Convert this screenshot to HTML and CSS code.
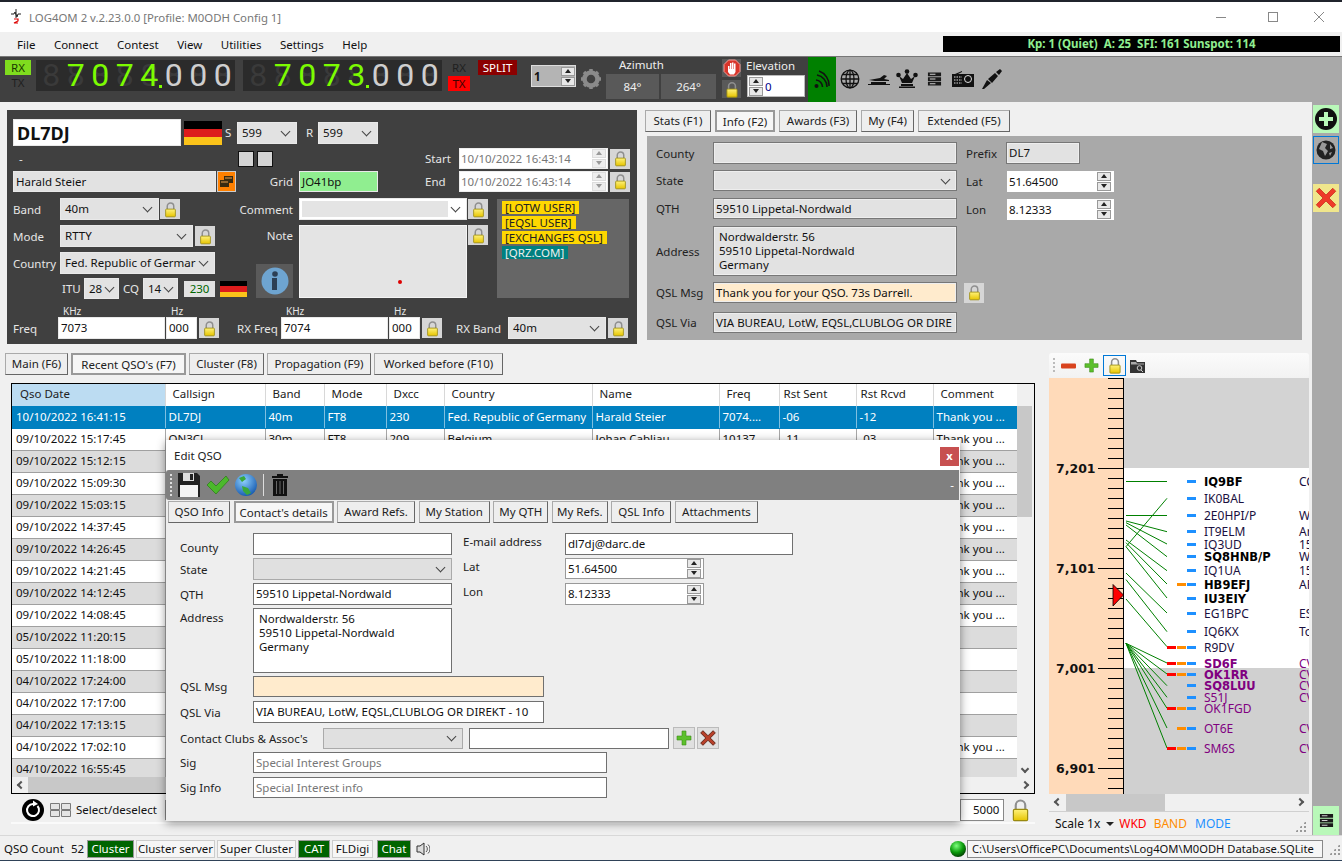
FILE: index.html
```html
<!DOCTYPE html>
<html lang="en">
<head>
    <meta charset="UTF-8">
    <title>LOG4OM 2</title>
    <link rel="stylesheet" href="styles.css">
</head>
<body>

    <!-- shared icons -->
    <svg class="sprite" width="0" height="0">
        <defs>
            <linearGradient id="lockFill" x1="0" y1="0" x2="0" y2="1">
                <stop offset="0" stop-color="#fff27a"/>
                <stop offset="1" stop-color="#e6c400"/>
            </linearGradient>
            <radialGradient id="globeFill" cx="0.4" cy="0.3" r="0.8">
                <stop offset="0" stop-color="#8fd0ff"/>
                <stop offset="1" stop-color="#0a4fa8"/>
            </radialGradient>
            <radialGradient id="ledFill" cx="0.4" cy="0.3" r="0.7">
                <stop offset="0" stop-color="#7dff7d"/>
                <stop offset="0.6" stop-color="#0a9a0a"/>
                <stop offset="1" stop-color="#034403"/>
            </radialGradient>
            <symbol id="lock" viewBox="0 0 16 20">
                <path d="M4 10V6a4 4 0 0 1 8 0v4" fill="none" stroke="#8f8f8f" stroke-width="1.8"/>
                <rect x="2" y="9.5" width="12" height="9.5" rx="1" fill="url(#lockFill)" stroke="#9a8a10"/>
            </symbol>
            <symbol id="plus" viewBox="0 0 16 16">
                <path d="M6 1h4v5h5v4h-5v5H6v-5H1V6h5z" fill="#5cc02c" stroke="#3c8a1a" stroke-width="0.6"/>
            </symbol>
            <symbol id="cross" viewBox="0 0 16 16">
                <path d="M1.5 3.5l2-2L8 6l4.500-4.500 2 2L10 8l4.500 4.500-2 2L8 10l-4.500 4.500-2-2L6 8z" fill="#b8402a" stroke="#5a1d10" stroke-width="0.8"/>
            </symbol>
            <symbol id="redcross" viewBox="0 0 16 16">
                <path d="M1.5 3.5l2-2L8 6l4.500-4.500 2 2L10 8l4.500 4.500-2 2L8 10l-4.500 4.500-2-2L6 8z" fill="#ee3a2a" stroke="#c92818" stroke-width="0.5"/>
            </symbol>
            <symbol id="stack" viewBox="0 0 16 16">
                <path d="M1 1h14v4H1zM1 6h14v4H1zM1 11h14v4H1z" fill="#1a1a1a"/>
                <path d="M3 2.500h6v1H3zM3 7.500h6v1H3zM3 12.500h6v1H3z" fill="#cfcfcf"/>
            </symbol>
        </defs>
    </svg>

    <div class="titlebar">
        <svg class="app-icon" width="12" height="16" viewBox="0 0 12 16">
            <path d="M6 0v9M1 5h3l1-2 2 5 1-3h3" fill="none" stroke="#222" stroke-width="1"/>
            <path d="M4 10h4v2l-4 2h4" fill="none" stroke="#d00" stroke-width="1.2"/>
        </svg>
        <span class="title-text">LOG4OM 2 v.2.23.0.0 [Profile: M0ODH Config 1]</span>
        <div class="win-btns">
            <svg class="win-min" width="12" height="12" viewBox="0 0 12 12"><path d="M1 6.500h10" stroke="#888"/></svg>
            <svg width="12" height="12" viewBox="0 0 12 12"><rect x="1.500" y="1.500" width="9" height="9" fill="none" stroke="#888"/></svg>
            <svg width="12" height="12" viewBox="0 0 12 12"><path d="M1 1l10 10M11 1L1 11" stroke="#888"/></svg>
        </div>
    </div>

    <div class="menubar">
        <span>File</span><span>Connect</span><span>Contest</span><span>View</span><span>Utilities</span><span>Settings</span><span>Help</span>
        <div class="kp-bar">Kp: 1 (Quiet)&nbsp; A: 25&nbsp; SFI: 161 Sunspot: 114</div>
    </div>

    <div class="toolbar">
        <div class="tb-dark">
            <div class="rxtx-left">
                <div class="rx-on">RX</div>
                <div class="tx-off">TX</div>
            </div>
            <div class="display ml5">
                <span class="dig"></span><span class="dig on">7</span><span class="dig on">0</span><span class="dig on">7</span><span class="dig on pt">4</span><span class="dig">0</span><span class="dig">0</span><span class="dig">0</span>
            </div>
            <div class="display ml8">
                <span class="dig"></span><span class="dig on">7</span><span class="dig on">0</span><span class="dig on">7</span><span class="dig on pt">3</span><span class="dig">0</span><span class="dig">0</span><span class="dig">0</span>
            </div>
            <div class="rxtx-right">
                <div class="tx-off">RX</div>
                <div class="tx-on">TX</div>
            </div>
            <div class="split">SPLIT</div>
            <div class="vfo-spin"><span class="vfo-num">1</span><span class="spin-btns"><i class="up"></i><i class="down"></i></span></div>
            <svg class="gear" width="22" height="22" viewBox="0 0 22 22">
                <circle cx="11" cy="11" r="6.500" fill="none" stroke="#8a8a8a" stroke-width="4.500"/>
                <path d="M11 1v4M11 17v4M1 11h4M17 11h4M4 4l3 3M15 15l3 3M18 4l-3 3M7 15l-3 3" stroke="#8a8a8a" stroke-width="3.500"/>
            </svg>
            <div class="azimuth">
                <div class="az-label">Azimuth</div>
                <div class="az-boxes"><span class="az-box w53">84°</span><span class="az-box w55">264°</span></div>
            </div>
            <div class="stop-col">
                <div class="stop-btn">
                    <svg width="18" height="18" viewBox="0 0 18 18">
                        <path d="M5.500 1h7L17 5.500v7L12.500 17h-7L1 12.500v-7z" fill="#d8352a" stroke="#f2a09a"/>
                        <path d="M5 7h1.500v4H5zM7 4h1.500v7H7zM9 3.500h1.500V11H9zM11 4.500h1.500V11H11zM5 10h7.500v3L11 15.500H7L5 13z" fill="#fff"/>
                    </svg>
                </div>
                <div class="stop-btn stop-lock"><svg width="14" height="17"><use href="#lock"/></svg></div>
            </div>
            <div class="elev-col">
                <div class="elev-label">Elevation</div>
                <div class="elev-spin"><span class="spin-btns"><i class="up"></i><i class="down"></i></span><span class="elev-num">0</span></div>
            </div>
        </div>
        <div class="tb-green">
            <svg width="16" height="19" viewBox="0 0 16 19">
                <circle cx="2.500" cy="16" r="2" fill="#111"/>
                <path d="M2 10a7 7 0 0 1 6.500 7M3 5a12 12 0 0 1 10 12M5 1a15 15 0 0 1 10 15" fill="none" stroke="#111" stroke-width="1.600"/>
            </svg>
        </div>
        <div class="tb-icons">
            <svg class="ml4" width="20" height="20" viewBox="0 0 20 20">
                <g fill="none" stroke="#111" stroke-width="1.300">
                    <circle cx="10" cy="10" r="8.800"/>
                    <ellipse cx="10" cy="10" rx="4" ry="8.800"/>
                    <path d="M10 1v18M1.500 10h17M3 5.500h14M3 14.500h14"/>
                </g>
            </svg>
            <svg class="ml8" width="22" height="12" viewBox="0 0 22 12">
                <path d="M0 11h22v1H0zM3 9h15v2H3zM1 7l11-2 4-3 3 1-3 3 5 1v1H7z" fill="#111"/>
            </svg>
            <svg class="ml6" width="22" height="19" viewBox="0 0 22 19">
                <circle cx="11" cy="2.500" r="2.300" fill="#111"/><circle cx="2.500" cy="6" r="2.300" fill="#111"/><circle cx="19.500" cy="6" r="2.300" fill="#111"/>
                <path d="M3 7l3 7h10l3-7-4 3-4-6-4 6zM5 15h12v2H5zM3 17.500h16V19H3z" fill="#111"/>
            </svg>
            <svg class="ml9" width="15" height="16" viewBox="0 0 16 16"><use href="#stack"/></svg>
            <svg class="ml10" width="22" height="16" viewBox="0 0 22 16">
                <path d="M0 3h22v13H0z" fill="#111"/><path d="M3 3l7-3v1L6 3z" fill="#111"/>
                <circle cx="16" cy="8" r="3.500" fill="none" stroke="#ddd"/>
                <path d="M2 6h8M2 9h8M2 12h8" stroke="#ddd" stroke-dasharray="1.500 1"/>
            </svg>
            <svg class="ml7" width="22" height="20" viewBox="0 0 22 20">
                <path d="M1 20l5-9 4 3-7 6zM7 10l7-6 3 3-6 7zM15 3l4-3 2 2-3 4z" fill="#111"/>
            </svg>
        </div>
    </div>

    <div class="main">
        <div class="content">

            <div class="top-row">
                <!-- main QSO entry -->
                <div class="qso-panel">
                    <div class="row mt9">
                        <div class="fld call w168">DL7DJ</div>
                        <div class="flag w38 h24 ml3"></div>
                        <span class="lbl w12 ml3">S</span>
                        <div class="fld sel w60 h22">599</div>
                        <span class="lbl w12 ml9">R</span>
                        <div class="fld sel w60 h22">599</div>
                    </div>
                    <div class="row mt2">
                        <span class="lbl w225 pl6">-</span>
                        <div class="mini"></div>
                        <div class="mini ml3"></div>
                        <span class="lbl w34 ml152">Start</span>
                        <div class="fld date w149">10/10/2022 16:43:14<span class="spin-btns light"><i class="up"></i><i class="down"></i></span></div>
                        <div class="lock ml2"><svg width="13" height="17"><use href="#lock"/></svg></div>
                    </div>
                    <div class="row mt2">
                        <div class="fld w203">Harald Steier</div>
                        <div class="orange-btn ml1">
                            <svg width="13" height="11" viewBox="0 0 13 11"><path d="M4 0h9v7H4zM0 4h9v7H0z" fill="#3a2a10"/><path d="M1 6h7M5 2h7" stroke="#e8a050"/></svg>
                        </div>
                        <span class="lbl w57 right">Grid</span>
                        <div class="fld green ml6 w79">JO41bp</div>
                        <span class="lbl w34 ml47">End</span>
                        <div class="fld date w149">10/10/2022 16:43:14<span class="spin-btns light"><i class="up"></i><i class="down"></i></span></div>
                        <div class="lock ml2"><svg width="13" height="17"><use href="#lock"/></svg></div>
                    </div>

                    <div class="mid-block">
                        <div class="w222">
                            <div class="row h22">
                                <span class="lbl w47">Band</span>
                                <div class="fld sel w99 h22">40m</div>
                                <div class="lock ml1"><svg width="13" height="17"><use href="#lock"/></svg></div>
                            </div>
                            <div class="row h22 mt5">
                                <span class="lbl w47">Mode</span>
                                <div class="fld sel w133 h22">RTTY</div>
                                <div class="lock ml2"><svg width="13" height="17"><use href="#lock"/></svg></div>
                            </div>
                            <div class="row h22 mt5">
                                <span class="lbl w47">Country</span>
                                <div class="fld sel w155 h22">Fed. Republic of Germar</div>
                            </div>
                            <div class="row row-itu mt4">
                                <span class="lbl w22 ml49">ITU</span>
                                <div class="fld sel tiny w35">28</div>
                                <span class="lbl w20 ml4">CQ</span>
                                <div class="fld sel tiny w35">14</div>
                                <div class="dxcc ml6">230</div>
                                <div class="flag w27 h16 ml5"></div>
                            </div>
                        </div>
                        <div class="w253">
                            <div class="row h22">
                                <span class="lbl w58 right">Comment</span>
                                <div class="fld sel sel-inset ml6 w168 h22"></div>
                                <div class="lock ml1"><svg width="13" height="17"><use href="#lock"/></svg></div>
                            </div>
                            <div class="note-row mt5">
                                <div class="note-side">
                                    <span class="lbl">Note</span>
                                    <div class="info-box">
                                        <svg width="28" height="28" viewBox="0 0 28 28">
                                            <circle cx="14" cy="14" r="13.500" fill="#6ea4d0"/>
                                            <circle cx="14" cy="7" r="2.800" fill="#2c3f55"/>
                                            <path d="M11 11h5v12h-5z" fill="#2c3f55"/>
                                        </svg>
                                    </div>
                                </div>
                                <div class="note-box ml6 w168"><span class="red-dot"></span></div>
                                <div class="lock ml1"><svg width="13" height="17"><use href="#lock"/></svg></div>
                            </div>
                        </div>
                        <div class="tags ml9">
                            <span class="tag">[LOTW USER]</span>
                            <span class="tag">[EQSL USER]</span>
                            <span class="tag">[EXCHANGES QSL]</span>
                            <span class="tag teal">[QRZ.COM]</span>
                        </div>
                    </div>

                    <div class="row unit-row">
                        <span class="unit w108 ml50">KHz</span>
                        <span class="unit w115">Hz</span>
                        <span class="unit w108">KHz</span>
                        <span class="unit">Hz</span>
                    </div>
                    <div class="row">
                        <span class="lbl w45">Freq</span>
                        <div class="fld white w107 h22">7073</div>
                        <div class="fld white w31 h22 ml1">000</div>
                        <div class="lock ml2"><svg width="13" height="17"><use href="#lock"/></svg></div>
                        <span class="lbl w44 ml18">RX Freq</span>
                        <div class="fld white w107 h22">7074</div>
                        <div class="fld white w31 h22 ml1">000</div>
                        <div class="lock ml2"><svg width="13" height="17"><use href="#lock"/></svg></div>
                        <span class="lbl w52 ml14">RX Band</span>
                        <div class="fld sel w98 h22">40m</div>
                        <div class="lock ml2"><svg width="13" height="17"><use href="#lock"/></svg></div>
                    </div>
                </div>

                <!-- info tabs -->
                <div class="info-side">
                    <div class="tabs gap4">
                        <div class="tab w66">Stats (F1)</div>
                        <div class="tab active w60">Info (F2)</div>
                        <div class="tab w78">Awards (F3)</div>
                        <div class="tab w53">My (F4)</div>
                        <div class="tab w92">Extended (F5)</div>
                    </div>
                    <div class="info-panel">
                        <div class="info-col-a">
                            <div class="row h22"><span class="dlbl w57">County</span><div class="fld inf w244 h22"></div></div>
                            <div class="row mt6"><span class="dlbl w57">State</span><div class="fld inf sel w244"></div></div>
                            <div class="row mt7"><span class="dlbl w57">QTH</span><div class="fld inf w244">59510 Lippetal-Nordwald</div></div>
                            <div class="row mt7"><span class="dlbl w57">Address</span><div class="fld inf multi w244 h50">Nordwalderstr. 56<br>59510 Lippetal-Nordwald<br>Germany</div></div>
                            <div class="row mt6"><span class="dlbl w57">QSL Msg</span><div class="fld inf msg w244">Thank you for your QSO. 73s Darrell.</div><div class="lock ml7"><svg width="13" height="17"><use href="#lock"/></svg></div></div>
                            <div class="row mt9"><span class="dlbl w57">QSL Via</span><div class="fld inf w244">VIA BUREAU, LotW, EQSL,CLUBLOG OR DIRE</div></div>
                        </div>
                        <div class="info-col-b">
                            <div class="row h22"><span class="dlbl w40">Prefix</span><div class="fld inf w74 h22">DL7</div></div>
                            <div class="row mt7"><span class="dlbl w41">Lat</span><div class="fld spin bare w107">51.64500<span class="spin-btns"><i class="up"></i><i class="down"></i></span></div></div>
                            <div class="row mt7"><span class="dlbl w41">Lon</span><div class="fld spin bare w107">8.12333<span class="spin-btns"><i class="up"></i><i class="down"></i></span></div></div>
                        </div>
                    </div>
                </div>
            </div>

            <div class="bottom-row">
                <div class="log-side">
                    <div class="tabs">
                        <div class="tab w63">Main (F6)</div>
                        <div class="tab active w115">Recent QSO's (F7)</div>
                        <div class="tab w75">Cluster (F8)</div>
                        <div class="tab w104">Propagation (F9)</div>
                        <div class="tab w129">Worked before (F10)</div>
                    </div>
                    <div class="grid-box">
                        <div class="grid-main">
                            <div class="grid-clip">
                                <table class="log">
                                    <colgroup>
                                        <col class="c153"><col class="c100"><col class="c59"><col class="c62"><col class="c58"><col class="c148"><col class="c127"><col class="c60"><col class="c77"><col class="c77"><col class="c84">
                                    </colgroup>
                                    <thead>
                                        <tr><th class="sorted">Qso Date</th><th>Callsign</th><th>Band</th><th>Mode</th><th>Dxcc</th><th>Country</th><th>Name</th><th>Freq</th><th class="tight">Rst Sent</th><th class="tight">Rst Rcvd</th><th>Comment</th></tr>
                                    </thead>
                                    <tbody>
                                        <tr class="selected"><td>10/10/2022 16:41:15</td><td>DL7DJ</td><td>40m</td><td>FT8</td><td>230</td><td>Fed. Republic of Germany</td><td>Harald Steier</td><td>7074....</td><td>-06</td><td>-12</td><td>Thank you ...</td></tr>
                                        <tr><td>09/10/2022 15:17:45</td><td>ON3CL</td><td>30m</td><td>FT8</td><td>209</td><td>Belgium</td><td>Johan Cabliau</td><td>10137</td><td>-11</td><td>-03</td><td>Thank you ...</td></tr>
                                        <tr><td>09/10/2022 15:12:15</td><td></td><td></td><td></td><td></td><td></td><td></td><td></td><td></td><td></td><td>Thank you ...</td></tr>
                                        <tr><td>09/10/2022 15:09:30</td><td></td><td></td><td></td><td></td><td></td><td></td><td></td><td></td><td></td><td>Thank you ...</td></tr>
                                        <tr><td>09/10/2022 15:03:15</td><td></td><td></td><td></td><td></td><td></td><td></td><td></td><td></td><td></td><td>Thank you ...</td></tr>
                                        <tr><td>09/10/2022 14:37:45</td><td></td><td></td><td></td><td></td><td></td><td></td><td></td><td></td><td></td><td>Thank you ...</td></tr>
                                        <tr><td>09/10/2022 14:26:45</td><td></td><td></td><td></td><td></td><td></td><td></td><td></td><td></td><td></td><td>Thank you ...</td></tr>
                                        <tr><td>09/10/2022 14:21:45</td><td></td><td></td><td></td><td></td><td></td><td></td><td></td><td></td><td></td><td>Thank you ...</td></tr>
                                        <tr><td>09/10/2022 14:12:45</td><td></td><td></td><td></td><td></td><td></td><td></td><td></td><td></td><td></td><td>Thank you ...</td></tr>
                                        <tr><td>09/10/2022 14:08:45</td><td></td><td></td><td></td><td></td><td></td><td></td><td></td><td></td><td></td><td>Thank you ...</td></tr>
                                        <tr><td>05/10/2022 11:20:15</td><td></td><td></td><td></td><td></td><td></td><td></td><td></td><td></td><td></td><td></td></tr>
                                        <tr><td>05/10/2022 11:18:00</td><td></td><td></td><td></td><td></td><td></td><td></td><td></td><td></td><td></td><td></td></tr>
                                        <tr><td>04/10/2022 17:24:00</td><td></td><td></td><td></td><td></td><td></td><td></td><td></td><td></td><td></td><td></td></tr>
                                        <tr><td>04/10/2022 17:17:00</td><td></td><td></td><td></td><td></td><td></td><td></td><td></td><td></td><td></td><td></td></tr>
                                        <tr><td>04/10/2022 17:13:15</td><td></td><td></td><td></td><td></td><td></td><td></td><td></td><td></td><td></td><td></td></tr>
                                        <tr><td>04/10/2022 17:02:10</td><td></td><td></td><td></td><td></td><td></td><td></td><td></td><td></td><td></td><td>Thank you ...</td></tr>
                                        <tr><td>04/10/2022 16:55:45</td><td></td><td></td><td></td><td></td><td></td><td></td><td></td><td></td><td></td><td></td></tr>
                                    </tbody>
                                </table>
                            </div>
                            <div class="vscroll"><div class="vthumb"></div><span class="chev-down"></span></div>
                        </div>
                        <div class="hscroll">
                            <span class="chev-left"></span><div class="hthumb"></div><span class="chev-right"></span>
                        </div>
                    </div>
                    <div class="grid-tools">
                        <svg width="22" height="22" viewBox="0 0 22 22">
                            <circle cx="11" cy="11" r="11" fill="#000"/>
                            <path d="M15.500 7a6 6 0 1 1-4.500-2" fill="none" stroke="#fff" stroke-width="2"/>
                            <path d="M11 1.500l5 3.500-5 2.500z" fill="#fff"/>
                        </svg>
                        <svg class="ml6" width="21" height="14" viewBox="0 0 21 14"><path d="M.5.5h9v6h-9zM11.500.5h9v6h-9zM.5 7.500h9v6h-9zM11.500 7.500h9v6h-9z" fill="#e4e4e4" stroke="#7a7a7a"/></svg>
                        <span class="sel-text">Select/deselect</span>
                        <span class="tools-sep"></span>
                        <div class="fld white limit w44 h22">5000</div>
                        <svg class="big-lock" width="19" height="24"><use href="#lock"/></svg>
                    </div>
                </div>

                <!-- band map -->
                <div class="bandmap">
                    <div class="bm-tools">
                        <span class="grip"></span>
                        <svg class="ml6" width="15" height="6" viewBox="0 0 15 6"><rect width="15" height="5" rx="1" y="0.500" fill="#d8431e"/></svg>
                        <svg class="ml8" width="15" height="15"><use href="#plus"/></svg>
                        <div class="bm-lock ml4"><svg width="14" height="17"><use href="#lock"/></svg></div>
                        <svg class="ml4" width="15" height="14" viewBox="0 0 15 14">
                            <path d="M0 1h6l1 2h8v11H0z" fill="#333"/><path d="M1 3h5l1 1.500h7v1H1z" fill="#aaa"/><circle cx="9.500" cy="9" r="2.300" fill="none" stroke="#ccc"/><path d="M11 11l2 2" stroke="#ccc"/>
                        </svg>
                    </div>
                    <svg class="bm-canvas" width="260" height="416" viewBox="1049 378 260 416">
                        <defs>
                            <pattern id="tick" patternUnits="userSpaceOnUse" x="0" y="378" width="15" height="10">
                                <rect width="15" height="1" fill="#000"/>
                            </pattern>
                        </defs>
                        <rect x="1049" y="378" width="75" height="416" fill="#ffdab9"/>
                        <rect x="1124" y="378" width="185" height="90" fill="#d3d3d3"/>
                        <rect x="1124" y="468" width="185" height="200" fill="#fff"/>
                        <rect x="1124" y="668" width="185" height="126" fill="#d0d0d0"/>
                        <rect x="1108" y="378" width="15" height="416" fill="url(#tick)"/>
                        <rect x="1123" y="378" width="1" height="416" fill="#000"/>
                        <rect x="1098" y="468" width="10" height="1" fill="#000"/>
                        <rect x="1098" y="568" width="10" height="1" fill="#000"/>
                        <rect x="1098" y="668" width="10" height="1" fill="#000"/>
                        <rect x="1098" y="768" width="10" height="1" fill="#000"/>
                        <text class="bm-scale" x="1056" y="473">7,201</text>
                        <text class="bm-scale" x="1056" y="573">7,101</text>
                        <text class="bm-scale" x="1056" y="673">7,001</text>
                        <text class="bm-scale" x="1056" y="773">6,901</text>
                        <path class="bm-lines" d="M1126 481.500H1167M1126 546.700L1167 498.300M1126 515.500H1167M1126 521L1167 531.700M1126 522.700L1167 544M1126 525L1167 556.700M1126 540L1167 570.700M1126 542.700L1167 584M1126 546.700L1167 598M1126 573L1167 613M1126 579.600L1167 631.700M1126 599L1167 646.700M1126 643.300L1167 663M1126 643.300L1167 674M1126 643.300L1167 685.700M1126 643.300L1167 697.300M1126 643.300L1167 708.300M1126 643.300L1167 728M1126 643.300L1167 748"/>
                        <path class="bm-mode" d="M1187 480h9v3h-9zM1187 497h9v3h-9zM1187 514h9v3h-9zM1187 530h9v3h-9zM1187 543h9v3h-9zM1187 555h9v3h-9zM1187 569h9v3h-9zM1187 583h9v3h-9zM1187 597h9v3h-9zM1187 612h9v3h-9zM1187 630h9v3h-9zM1187 646h9v3h-9zM1187 662h9v3h-9zM1187 673h9v3h-9zM1187 684h9v3h-9zM1187 696h9v3h-9zM1187 707h9v3h-9zM1187 727h9v3h-9zM1187 747h9v3h-9z"/>
                        <path class="bm-band" d="M1177 583h9v3h-9zM1177 646h9v3h-9zM1177 662h9v3h-9zM1177 673h9v3h-9zM1177 707h9v3h-9zM1177 727h9v3h-9zM1177 747h9v3h-9z"/>
                        <path class="bm-wkd" d="M1167 646h9v3h-9zM1167 662h9v3h-9zM1167 673h9v3h-9zM1167 707h9v3h-9zM1167 747h9v3h-9z"/>
                        <path d="M1113 584.500L1123.500 595L1113 606z" fill="#f00" stroke="#000" stroke-width="0.800"/>
                        <g class="bm-calls">
                            <text class="b" x="1204" y="485.500">IQ9BF</text><text x="1299" y="485.500">CC</text>
                            <text x="1204" y="502.500">IK0BAL</text>
                            <text x="1204" y="520">2E0HPI/P</text><text x="1299" y="520">WW</text>
                            <text x="1204" y="536">IT9ELM</text><text x="1299" y="536">Ar</text>
                            <text x="1204" y="549">IQ3UD</text><text x="1299" y="549">15</text>
                            <text class="b" x="1204" y="561">SQ8HNB/P</text><text x="1299" y="561">WW</text>
                            <text x="1204" y="575">IQ1UA</text><text x="1299" y="575">15</text>
                            <text class="b" x="1204" y="589">HB9EFJ</text><text x="1299" y="589">AF</text>
                            <text class="b" x="1204" y="603">IU3EIY</text>
                            <text x="1204" y="618">EG1BPC</text><text x="1299" y="618">ES</text>
                            <text x="1204" y="636">IQ6KX</text><text x="1299" y="636">To</text>
                            <text x="1204" y="652">R9DV</text>
                            <g class="dup">
                                <text class="b" x="1204" y="668">SD6F</text><text x="1299" y="668">CV</text>
                                <text class="b" x="1204" y="679">OK1RR</text><text x="1299" y="679">CV</text>
                                <text class="b" x="1204" y="690">SQ8LUU</text><text x="1299" y="690">CV</text>
                                <text x="1204" y="702">S51J</text><text x="1299" y="702">CV</text>
                                <text x="1204" y="713">OK1FGD</text>
                                <text x="1204" y="733">OT6E</text><text x="1299" y="733">CV</text>
                                <text x="1204" y="753">SM6S</text><text x="1299" y="753">CV</text>
                            </g>
                        </g>
                    </svg>
                    <div class="bm-hscroll"><span class="chev-left"></span><div class="bm-thumb"></div><span class="chev-right"></span></div>
                    <div class="bm-scale-row">
                        <span>Scale 1x</span><span class="dd-arrow"></span>
                        <span class="k-wkd">WKD</span><span class="k-band">BAND</span><span class="k-mode">MODE</span>
                        <span class="grip-corner"></span>
                    </div>
                </div>
            </div>
        </div>

        <div class="sidebar">
            <div class="side-btn plus-btn">
                <svg width="22" height="22" viewBox="0 0 22 22"><circle cx="11" cy="11" r="11" fill="#111"/><path d="M9 4h4v5h5v4h-5v5H9v-5H4V9h5z" fill="#b9f8b9"/></svg>
            </div>
            <div class="side-btn globe-btn">
                <svg width="20" height="20" viewBox="0 0 20 20"><circle cx="10" cy="10" r="9.500" fill="#222"/><path d="M6 2l5 2-2 4 3 3-3 5-2-5-4-2zM14 4l3 4-3 1zM13 13l3-1-2 4z" fill="#999"/></svg>
            </div>
            <div class="side-btn close-btn"><svg width="24" height="24"><use href="#redcross"/></svg></div>
            <div class="side-btn list-btn"><svg width="15" height="15"><use href="#stack"/></svg></div>
        </div>
    </div>

    <div class="statusbar">
        <span class="st-count">QSO Count</span><span class="st-num">52</span>
        <div class="st-btn on w47">Cluster</div>
        <div class="st-btn w79">Cluster server</div>
        <div class="st-btn w79">Super Cluster</div>
        <div class="st-btn on w32">CAT</div>
        <div class="st-btn w41">FLDigi</div>
        <div class="st-btn on w34 ml2">Chat</div>
        <svg class="ml3" width="14" height="14" viewBox="0 0 14 14">
            <path d="M1 4h3l4-3v12L4 10H1z" fill="#ddd" stroke="#333"/>
            <path d="M10 4a4 4 0 0 1 0 6M12 2.500a6 6 0 0 1 0 9" fill="none" stroke="#555"/>
        </svg>
        <svg class="led" width="16" height="16" viewBox="0 0 16 16"><circle cx="8" cy="8" r="8" fill="url(#ledFill)"/></svg>
        <div class="st-path">C:\Users\OfficePC\Documents\Log4OM\M0ODH Database.SQLite</div>
        <span class="grip-corner st-grip"></span>
    </div>
    <div class="desktop-edge"></div>

    <!-- Edit QSO dialog -->
    <div class="dialog">
        <div class="dlg-title">
            <span>Edit QSO</span>
            <div class="dlg-close">x</div>
        </div>
        <div class="dlg-tools">
            <span class="grip light-grip"></span>
            <svg class="ml6" width="22" height="24" viewBox="0 0 22 24">
                <path d="M0 0h19l3 3v21H0z" fill="#222"/><path d="M2 12h18v12H2z" fill="#f4f4f4"/><path d="M5 0h11v8H5z" fill="#ddd"/><path d="M12 1h3v6h-3z" fill="#222"/>
            </svg>
            <svg class="ml6" width="24" height="20" viewBox="0 0 24 20">
                <path d="M1 10l4-4 5 5L20 1l3 4-13 14z" fill="#4cb82c" stroke="#2a7a14" stroke-width="0.700"/>
            </svg>
            <svg class="ml5" width="22" height="24" viewBox="0 0 22 24">
                <circle cx="11" cy="12" r="11" fill="url(#globeFill)"/>
                <path d="M7 13l6 2 3 5-4 2-4-4zM4 5l5-2 2 3-4 3z" fill="#3aa83a"/>
            </svg>
            <span class="dlg-sep"></span>
            <svg class="ml8" width="16" height="22" viewBox="0 0 16 22">
                <path d="M5 0h6v2h5v2H0V2h5zM1 5h14v17H1z" fill="#111"/><path d="M4.500 7v13M8 7v13M11.500 7v13" stroke="#666"/>
            </svg>
            <span class="dlg-min">-</span>
        </div>
        <div class="tabs dlg-tabs">
            <div class="tab w62">QSO Info</div>
            <div class="tab active w100">Contact's details</div>
            <div class="tab w78">Award Refs.</div>
            <div class="tab w71">My Station</div>
            <div class="tab w55">My QTH</div>
            <div class="tab w56">My Refs.</div>
            <div class="tab w60">QSL Info</div>
            <div class="tab w83">Attachments</div>
        </div>
        <div class="dlg-form">
            <div class="dlg-upper">
                <div class="w272">
                    <div class="row h22"><span class="dlbl w73 lbl-low">County</span><div class="fld dlg w199 h22"></div></div>
                    <div class="row mt3"><span class="dlbl w73">State</span><div class="fld sel dis w199 h22"></div></div>
                    <div class="row mt3"><span class="dlbl w73">QTH</span><div class="fld dlg w199 h22">59510 Lippetal-Nordwald</div></div>
                    <div class="row row-top mt3"><span class="dlbl w73 pt2">Address</span><div class="fld dlg multi w199 h65">Nordwalderstr. 56<br>59510 Lippetal-Nordwald<br>Germany</div></div>
                </div>
                <div class="ml11">
                    <div class="row row-top"><span class="dlbl lh18 w102">E-mail address</span><div class="fld dlg w228 h22">dl7dj@darc.de</div></div>
                    <div class="row row-top mt3"><span class="dlbl lh18 w102">Lat</span><div class="fld spin dlg-spin w139">51.64500<span class="spin-btns"><i class="up"></i><i class="down"></i></span></div></div>
                    <div class="row row-top mt4"><span class="dlbl lh18 w102">Lon</span><div class="fld spin dlg-spin w139 h22">8.12333<span class="spin-btns"><i class="up"></i><i class="down"></i></span></div></div>
                </div>
            </div>
            <div class="row mt3"><span class="dlbl w73">QSL Msg</span><div class="fld dlg msg w291">&nbsp;</div></div>
            <div class="row mt4"><span class="dlbl w73">QSL Via</span><div class="fld dlg w291 h22">VIA BUREAU, LotW, EQSL,CLUBLOG OR DIREKT - 10</div></div>
            <div class="row mt4">
                <span class="dlbl w143">Contact Clubs &amp; Assoc's</span>
                <div class="fld sel dis w140"></div>
                <div class="fld dlg ml6 w200"></div>
                <div class="mini-btn ml4"><svg width="16" height="16"><use href="#plus"/></svg></div>
                <div class="mini-btn ml2"><svg width="18" height="18"><use href="#cross"/></svg></div>
            </div>
            <div class="row mt3"><span class="dlbl w73">Sig</span><div class="fld dlg hint w354">Special Interest Groups</div></div>
            <div class="row mt4"><span class="dlbl w73">Sig Info</span><div class="fld dlg hint w354">Special Interest info</div></div>
        </div>
    </div>

</body>
</html>
```

FILE: styles.css
```css
* {
    box-sizing: border-box;
}

body {
    font-family: "Noto Sans", Tahoma, sans-serif;
    font-size: 11.5px;
    color: #111;
    background-color: #f0f0f0;
    margin: 0;
    width: 1342px;
    height: 861px;
    overflow: hidden;
    position: relative;
}

.sprite {
    position: absolute;
}

/* title and menu */
.titlebar {
    height: 32px;
    background: #fff;
    border-top: 2px solid #20242c;
    display: flex;
    align-items: center;
    padding-left: 10px;
}

.app-icon {
    margin-right: 7px;
}

.title-text {
    color: #777;
    font-size: 11.4px;
}

.win-btns {
    margin-left: auto;
    display: flex;
    gap: 34px;
    padding-right: 17px;
}

.win-min {
    margin-right: 6px;
}

.menubar {
    height: 24px;
    display: flex;
    align-items: center;
    gap: 18.5px;
    padding-left: 17px;
}

.kp-bar {
    margin-left: auto;
    margin-right: 2px;
    width: 397px;
    height: 16px;
    background: #000;
    color: #90ee90;
    font-weight: bold;
    font-size: 11.5px;
    line-height: 16px;
    text-align: center;
}

/* top toolbar */
.toolbar {
    height: 46px;
    display: flex;
    border-top: 1px solid #777;
}

.tb-dark {
    width: 808px;
    background: #404040;
    display: flex;
    align-items: flex-start;
    padding: 3px 0 0 5px;
}

.tb-green {
    width: 28px;
    background: #008000;
    display: flex;
    align-items: center;
    justify-content: center;
}

.tb-icons {
    flex: 1;
    background: #a9a9a9;
    display: flex;
    align-items: center;
    padding-bottom: 2px;
}

.rxtx-left {
    width: 26px;
    text-align: center;
}

.rx-on {
    background: #7fdc1e;
    height: 15px;
    line-height: 15px;
    color: #1a3a00;
}

.tx-off {
    color: #202020;
    height: 15px;
    line-height: 15px;
    text-align: center;
}

.display {
    width: 199px;
    height: 31px;
    background: #2b2b2b;
    display: flex;
    padding-left: 3px;
}

.dig {
    position: relative;
    isolation: isolate;
    width: 24.6px;
    height: 31px;
    text-align: center;
    font-family: Roboto, sans-serif;
    font-size: 32px;
    font-weight: 400;
    line-height: 31px;
    color: #cfcfcf;
}

.dig::before {
    content: "8";
    position: absolute;
    left: 0;
    right: 0;
    color: #3a3a3a;
    z-index: -1;
}

.dig.on {
    color: #7cfc00;
}

.dig.pt::after {
    content: "";
    position: absolute;
    right: 0;
    bottom: 3px;
    width: 3px;
    height: 3px;
    background: #7cfc00;
}

.rxtx-right {
    width: 22px;
    margin-left: 6px;
}

.tx-on {
    background: #f00;
    color: #400;
    height: 15px;
    line-height: 15px;
    text-align: center;
    margin-top: 1px;
}

.split {
    width: 39px;
    height: 15px;
    line-height: 15px;
    margin-left: 8px;
    background: #8b0000;
    color: #fff;
    text-align: center;
}

.vfo-spin {
    width: 45px;
    height: 22px;
    margin: 5px 0 0 14px;
    background: #b4b4b4;
    border: 1px solid #ddd;
    display: flex;
    align-items: center;
    justify-content: space-between;
    padding-left: 2px;
    font-weight: bold;
}

.spin-btns {
    display: flex;
    flex-direction: column;
    gap: 1px;
    width: 14px;
    flex: none;
}

.spin-btns i {
    height: 9px;
    background: #e8e8e8;
    border: 1px solid #999;
    position: relative;
    display: block;
}

.spin-btns i::after {
    content: "";
    position: absolute;
    left: 3px;
    top: 1px;
    border-left: 3px solid transparent;
    border-right: 3px solid transparent;
}

.spin-btns .up::after {
    border-bottom: 4px solid #222;
}

.spin-btns .down::after {
    border-top: 4px solid #222;
}

.spin-btns.light i {
    background: #eee;
    border-color: #ddd;
}

.spin-btns.light i::after {
    border-bottom-color: #999;
    border-top-color: #999;
}

.gear {
    margin: 8px 0 0 4px;
}

.azimuth {
    margin: -3px 0 0 4px;
    color: #eee;
}

.az-label {
    height: 17px;
    line-height: 15px;
    padding-left: 13px;
}

.az-boxes {
    display: flex;
    gap: 2px;
}

.az-box {
    height: 25px;
    line-height: 25px;
    background: #595959;
    color: #eee;
    text-align: center;
}

.stop-col {
    margin: -1px 0 0 6px;
    width: 19px;
}

.stop-btn {
    width: 19px;
    height: 18px;
    background: #595959;
    display: flex;
    align-items: center;
    justify-content: center;
}

.stop-lock {
    margin-top: 3px;
}

.elev-col {
    margin: -2px 0 0 5px;
    width: 60px;
    color: #eee;
}

.elev-label {
    height: 17px;
    line-height: 15px;
}

.elev-spin {
    margin-left: 1px;
    width: 58px;
    height: 22px;
    background: #fff;
    border: 1px solid #bbb;
    display: flex;
    align-items: center;
    color: #111;
    padding-left: 1px;
    gap: 2px;
}

.elev-num {
    color: #008;
}

/* generic rows and fields */
.row {
    display: flex;
    align-items: center;
}

.row-top {
    align-items: flex-start;
}

.lbl {
    color: #e6e6e6;
    white-space: nowrap;
    flex: none;
}

.dlbl {
    color: #222;
    white-space: nowrap;
    flex: none;
}

.lbl-low {
    align-self: flex-end;
    line-height: 14px;
}

.lh18 {
    line-height: 18px;
}

.pt2 {
    padding-top: 2px;
}

.right {
    text-align: right;
}

.fld {
    height: 21px;
    flex: none;
    background: #e2e2e2;
    border: 1px solid #e9e9e9;
    padding: 0 2px;
    line-height: 18px;
    white-space: nowrap;
    overflow: hidden;
    position: relative;
    display: flex;
    align-items: center;
}

.fld.white {
    background: #fff;
}

.fld.green {
    background: #90ee90;
}

.fld.call {
    height: 27px;
    background: #fff;
    font-weight: bold;
    font-size: 18px;
    padding-left: 3px;
}

.fld.date {
    background: #fff;
    color: #777;
    padding-left: 1px;
    padding-right: 1px;
    border-color: #eee;
    justify-content: space-between;
}

.fld.sel {
    padding-left: 4px;
}

.sel::after {
    content: "";
    position: absolute;
    right: 7px;
    top: 50%;
    margin-top: -5px;
    width: 6px;
    height: 6px;
    border-right: 1px solid #444;
    border-bottom: 1px solid #444;
    transform: rotate(45deg);
}

.tiny::after {
    right: 5px;
}

.fld.sel-inset {
    background: #fff;
    padding: 2px 18px 2px 2px;
}

.sel-inset::before {
    content: "";
    display: block;
    width: 100%;
    height: 100%;
    background: #e4e4e4;
}

.mini {
    width: 16px;
    height: 16px;
    background: #d4d4d4;
    border: 1px solid #111;
    flex: none;
}

.lock {
    width: 20px;
    height: 20px;
    background: #d6d6d6;
    display: flex;
    align-items: center;
    justify-content: center;
    flex: none;
}

.orange-btn {
    width: 19px;
    height: 21px;
    background: #ff8000;
    border: 1px solid #ccc;
    display: flex;
    align-items: center;
    justify-content: center;
    flex: none;
}

.flag {
    background: linear-gradient(#000 0 33.3%, #dd1c1c 33.3% 66.6%, #fbc31a 66.6%);
    flex: none;
}

/* QSO entry panel */
.top-row {
    display: flex;
    height: 251px;
    padding: 8px 0 0 7px;
}

.qso-panel {
    width: 630px;
    height: 234px;
    background: #404040;
    padding-left: 6px;
    flex: none;
}

.mid-block {
    display: flex;
    margin-top: 6px;
    height: 101px;
}

.row-itu {
    width: 243px;
}

.note-row {
    display: flex;
    align-items: flex-start;
}

.note-side {
    width: 58px;
    height: 73px;
    display: flex;
    flex-direction: column;
    align-items: flex-end;
    justify-content: space-between;
    padding-top: 3px;
}

.info-box {
    width: 37px;
    height: 34px;
    background: #5a5a5a;
    display: flex;
    align-items: center;
    justify-content: center;
}

.note-box {
    height: 73px;
    background: #e4e4e4;
    border: 1px solid #f4f4f4;
    position: relative;
    flex: none;
}

.red-dot {
    position: absolute;
    left: 98px;
    top: 54px;
    width: 4px;
    height: 4px;
    border-radius: 50%;
    background: #d00;
}

.dxcc {
    width: 31px;
    height: 16px;
    background: #e2e2e2;
    color: #060;
    text-align: center;
    line-height: 15px;
    flex: none;
}

.tags {
    width: 132px;
    height: 99px;
    margin-top: 1px;
    background: #666;
    padding: 2px 5px;
    display: flex;
    flex-direction: column;
    align-items: flex-start;
    gap: 2px;
}

.tag {
    height: 13px;
    line-height: 13px;
    background: #ffd700;
    color: #222;
    padding: 0 4px 0 3px;
    white-space: nowrap;
}

.tag.teal {
    background: #008080;
    color: #eee;
}

.unit-row {
    margin-top: 5px;
    height: 13px;
}

.unit {
    font-size: 10px;
    color: #e6e6e6;
    flex: none;
}

/* tabs */
.tabs {
    display: flex;
    gap: 3px;
    height: 22px;
}

.gap4 {
    gap: 4px;
}

.tab {
    height: 22px;
    flex: none;
    background: #eee;
    border: 1px solid #aaa;
    border-right-color: #666;
    border-bottom-color: #666;
    text-align: center;
    line-height: 20px;
    white-space: nowrap;
    color: #222;
}

.tab.active {
    background: #f6f6f6;
    border: 2px solid #999;
    line-height: 20px;
}

/* info panel */
.info-side {
    margin-left: 8px;
}

.info-panel {
    width: 655px;
    height: 204px;
    margin: 4px 0 0 2px;
    background: #a9a9a9;
    padding: 6px 0 0 9px;
    display: flex;
}

.info-col-a {
    width: 301px;
}

.info-col-b {
    margin-left: 9px;
}

.fld.inf {
    background: #e2e2e2;
    border-color: #777;
    box-shadow: inset 0 0 0 1px #eee;
}

.fld.multi {
    align-items: flex-start;
    white-space: normal;
    line-height: 14px;
    padding: 3px 5px;
    display: block;
}

.fld.msg {
    background: #ffebcd;
}

.fld.bare {
    background: #fff;
    border-color: #fff;
    padding-left: 1px;
}

.fld.spin {
    justify-content: space-between;
    padding-right: 2px;
}

/* log grid */
.bottom-row {
    display: flex;
    height: 482px;
}

.log-side {
    width: 1049px;
    padding-left: 5px;
    flex: none;
}

.grid-box {
    width: 1024px;
    height: 411px;
    margin: 8px 0 0 6px;
    border: 1px solid #000;
    background: #f0f0f0;
}

.grid-main {
    display: flex;
    height: 393px;
}

.grid-clip {
    width: 1005px;
    height: 393px;
    overflow: hidden;
    background: #fff;
}

table.log {
    border-collapse: collapse;
    table-layout: fixed;
    width: 1005px;
}

.c153 { width: 153px; }
.c100 { width: 100px; }
.c59 { width: 59px; }
.c62 { width: 62px; }
.c58 { width: 58px; }
.c148 { width: 148px; }
.c127 { width: 127px; }
.c60 { width: 60px; }
.c77 { width: 77px; }
.c84 { width: 84px; }

.log th {
    height: 22px;
    font-weight: normal;
    text-align: left;
    padding: 0 0 3px 7px;
    background: #fff;
    border-right: 1px solid #d8d8d8;
    color: #222;
}

.log th.sorted {
    background: #bcdcf2;
    padding-left: 8px;
}

.log th.tight {
    padding-left: 4px;
}

.log td {
    height: 22px;
    padding: 0 0 1px 3px;
    border-right: 1px solid #a8a8a8;
    border-bottom: 1px solid #a0a0a0;
    white-space: nowrap;
    overflow: hidden;
    background: #fff;
}

.log td:first-child {
    padding-left: 4px;
}

.log tbody tr:nth-child(odd) td {
    background: #dcdcdc;
}

.log tbody tr.selected td {
    background: #0080c0;
    color: #fff;
    border-color: #0080c0;
    border-right-color: #7fbfe0;
}

.vscroll {
    width: 17px;
    position: relative;
}

.vthumb {
    width: 15px;
    height: 111px;
    margin-top: 22px;
    background: #c8c8c8;
}

.chev-down,
.chev-left,
.chev-right {
    position: absolute;
    width: 6px;
    height: 6px;
    border-right: 2px solid #555;
    border-bottom: 2px solid #555;
}

.chev-down {
    left: 5px;
    bottom: 5px;
    transform: rotate(45deg);
}

.chev-left {
    left: 6px;
    top: 5px;
    transform: rotate(135deg);
}

.chev-right {
    right: 6px;
    top: 5px;
    transform: rotate(-45deg);
}

.hscroll {
    height: 16px;
    position: relative;
}

.hthumb {
    position: absolute;
    left: 16px;
    top: 0;
    width: 900px;
    height: 16px;
    background: #c8c8c8;
}

.grid-tools {
    height: 30px;
    margin-left: 6px;
    width: 1024px;
    display: flex;
    align-items: center;
    padding: 3px 0 0 11px;
    border-bottom: 2px solid #fafafa;
}

.sel-text {
    margin-left: 5px;
}

.tools-sep {
    width: 1px;
    height: 20px;
    background: #888;
    margin-left: 8px;
}

.limit {
    margin-left: auto;
    border-color: #888;
    justify-content: flex-start;
    padding-left: 12px;
}

.big-lock {
    margin: 0 5px 0 7px;
}

/* band map */
.bandmap {
    width: 260px;
    flex: none;
    margin-right: 3px;
}

.bm-tools {
    height: 25px;
    background: linear-gradient(#fbfbfb, #f2f2f2);
    border-radius: 3px;
    display: flex;
    align-items: center;
    padding-left: 4px;
}

.grip {
    width: 2px;
    height: 16px;
    background: repeating-linear-gradient(#bbb 0 2px, transparent 2px 4px);
    flex: none;
}

.bm-lock {
    width: 23px;
    height: 21px;
    border: 1px solid #0078d7;
    display: flex;
    align-items: center;
    justify-content: center;
}

.bm-canvas {
    display: block;
}

.bm-scale {
    font-family: "DejaVu Sans", sans-serif;
    font-weight: bold;
    font-size: 12.500px;
    fill: #111;
}

.bm-lines {
    fill: none;
    stroke: #008000;
    stroke-width: 1;
}

.bm-mode {
    fill: #1e90ff;
}

.bm-band {
    fill: #ff8c00;
}

.bm-wkd {
    fill: #f00;
}

.bm-calls text {
    font-size: 12px;
    fill: #1a1040;
}

.bm-calls .b {
    font-family: "DejaVu Sans", sans-serif;
    font-size: 11.500px;
    font-weight: bold;
    fill: #000;
}

.bm-calls .dup text {
    fill: #800080;
}

.bm-hscroll {
    height: 17px;
    position: relative;
}

.bm-thumb {
    position: absolute;
    left: 17px;
    top: 0;
    width: 99px;
    height: 17px;
    background: #c8c8c8;
}

.bm-scale-row {
    height: 24px;
    border-top: 1px solid #d0d0d0;
    display: flex;
    align-items: center;
    padding-left: 6px;
    position: relative;
    font-size: 12px;
}

.dd-arrow {
    margin-left: 6px;
    border-left: 4px solid transparent;
    border-right: 4px solid transparent;
    border-top: 4px solid #222;
}

.k-wkd {
    color: #f00;
    margin-left: 5px;
}

.k-band {
    color: #ff8c00;
    margin-left: 7px;
}

.k-mode {
    color: #1e90ff;
    margin-left: 8px;
}

.grip-corner {
    position: absolute;
    right: 3px;
    bottom: 3px;
    width: 11px;
    height: 11px;
    background: radial-gradient(circle, #999 1px, transparent 1.200px) 0 0 / 4px 4px;
    clip-path: polygon(100% 0, 100% 100%, 0 100%);
}

/* right sidebar */
.main {
    display: flex;
    height: 733px;
}

.content {
    width: 1312px;
    flex: none;
}

.sidebar {
    width: 30px;
    background: #a9a9a9;
    position: relative;
    display: flex;
    flex-direction: column;
    padding: 3px 3px 0 1px;
}

.side-btn {
    width: 26px;
    height: 28px;
    display: flex;
    align-items: center;
    justify-content: center;
    flex: none;
}

.plus-btn {
    background: #b9f8b9;
}

.globe-btn {
    border: 1px solid #0078d7;
    margin-top: 3px;
}

.close-btn {
    background: #f0e68c;
    margin-top: 20px;
}

.list-btn {
    background: #b9f8b9;
    margin-top: auto;
    height: 29px;
}

/* status bar */
.statusbar {
    height: 23px;
    border-top: 1px solid #d8d8d8;
    display: flex;
    align-items: center;
    position: relative;
    padding: 3px 0 0 4px;
}

.st-count {
    width: 67px;
}

.st-num {
    width: 16px;
}

.st-btn {
    height: 18px;
    line-height: 16px;
    text-align: center;
    background: #f6f6f6;
    border: 1px solid #ccc;
    margin-right: 2px;
    flex: none;
    white-space: nowrap;
}

.st-btn.on {
    background: #006400;
    color: #fff;
    border-color: #9a9a9a;
}

.led {
    margin-left: 520px;
}

.st-path {
    width: 356px;
    height: 18px;
    margin-left: 1px;
    line-height: 16px;
    padding-left: 4px;
    background: #f6f6f6;
    border: 1px solid #888;
    white-space: nowrap;
    overflow: hidden;
    font-size: 11.2px;
}

.st-grip {
    right: 2px;
}

.desktop-edge {
    height: 1px;
    margin-top: 2px;
    background: #2f4258;
}

/* dialog */
.dialog {
    position: absolute;
    left: 166px;
    top: 440px;
    width: 794px;
    height: 381px;
    background: #eee;
    box-shadow: 0 2px 9px rgba(0, 0, 0, 0.45);
}

.dlg-title {
    height: 30px;
    background: #fff;
    display: flex;
    align-items: center;
    padding-left: 8px;
    color: #222;
}

.dlg-close {
    position: absolute;
    right: 1px;
    top: 7px;
    width: 19px;
    height: 19px;
    background: #c75050;
    color: #fff;
    font-weight: bold;
    font-size: 11px;
    line-height: 17px;
    text-align: center;
}

.dlg-tools {
    height: 30px;
    width: 793px;
    background: #808080;
    border-radius: 3px 0 0 3px;
    display: flex;
    align-items: center;
    padding-left: 4px;
    position: relative;
}

.light-grip {
    height: 22px;
    background: repeating-linear-gradient(#ddd 0 2px, transparent 2px 4px);
}

.dlg-sep {
    width: 1px;
    height: 22px;
    background: #ddd;
    margin-left: 6px;
}

.dlg-min {
    position: absolute;
    right: 5px;
    top: 7px;
    color: #fff;
}

.dlg-tabs {
    margin: 1px 0 0 2px;
    gap: 3.57px;
}

.dlg-form {
    padding: 10px 0 0 14px;
}

.dlg-upper {
    display: flex;
}

.fld.dlg {
    background: #fff;
    border-color: #707070;
}

.fld.dlg.msg {
    background: #ffebcd;
}

.fld.dlg.multi {
    padding-left: 5px;
}

.fld.dis {
    background: #e0e0e0;
    border-color: #aaa;
}

.fld.dlg-spin {
    background: #fff;
    border-color: #999;
}

.fld.hint {
    color: #777;
}

.mini-btn {
    width: 22px;
    height: 22px;
    background: #e0e0e0;
    border: 1px solid #bbb;
    display: flex;
    align-items: center;
    justify-content: center;
    flex: none;
}

/* sizing helpers */
.w12 { width: 12px; }
.w20 { width: 20px; }
.w22 { width: 22px; }
.w27 { width: 27px; }
.w31 { width: 31px; }
.w32 { width: 32px; }
.w34 { width: 34px; }
.w35 { width: 35px; }
.w38 { width: 38px; }
.w40 { width: 40px; }
.w41 { width: 41px; }
.w44 { width: 44px; }
.w45 { width: 45px; }
.w47 { width: 47px; }
.w52 { width: 52px; }
.w53 { width: 53px; }
.w55 { width: 55px; }
.w56 { width: 56px; }
.w57 { width: 57px; }
.w58 { width: 58px; }
.w60 { width: 60px; }
.w62 { width: 62px; }
.w63 { width: 63px; }
.w66 { width: 66px; }
.w71 { width: 71px; }
.w73 { width: 73px; }
.w74 { width: 74px; }
.w75 { width: 75px; }
.w78 { width: 78px; }
.w79 { width: 79px; }
.w83 { width: 83px; }
.w92 { width: 92px; }
.w98 { width: 98px; }
.w99 { width: 99px; }
.w100 { width: 100px; }
.w102 { width: 102px; }
.w104 { width: 104px; }
.w107 { width: 107px; }
.w108 { width: 108px; }
.w115 { width: 115px; }
.w129 { width: 129px; }
.w133 { width: 133px; }
.w139 { width: 139px; }
.w140 { width: 140px; }
.w143 { width: 143px; }
.w149 { width: 149px; }
.w155 { width: 155px; }
.w168 { width: 168px; }
.w199 { width: 199px; }
.w200 { width: 200px; }
.w203 { width: 203px; }
.w222 { width: 222px; flex: none; }
.w225 { width: 225px; }
.w228 { width: 228px; }
.w244 { width: 244px; }
.w253 { width: 253px; flex: none; }
.w272 { width: 272px; flex: none; }
.w291 { width: 291px; }
.w354 { width: 354px; }

.h16 { height: 16px; }
.h22 { height: 22px; }
.h24 { height: 24px; }
.h50 { height: 50px; }
.h65 { height: 65px; }

.ml1 { margin-left: 1px; }
.ml2 { margin-left: 2px; }
.ml3 { margin-left: 3px; }
.ml4 { margin-left: 4px; }
.ml5 { margin-left: 5px; }
.ml6 { margin-left: 6px; }
.ml7 { margin-left: 7px; }
.ml8 { margin-left: 8px; }
.ml9 { margin-left: 9px; }
.ml10 { margin-left: 10px; }
.ml11 { margin-left: 11px; }
.ml14 { margin-left: 14px; }
.ml18 { margin-left: 18px; }
.ml47 { margin-left: 47px; }
.ml49 { margin-left: 49px; }
.ml50 { margin-left: 50px; }
.ml152 { margin-left: 152px; }

.mt2 { margin-top: 2px; }
.mt3 { margin-top: 3px; }
.mt4 { margin-top: 4px; }
.mt5 { margin-top: 5px; }
.mt6 { margin-top: 6px; }
.mt7 { margin-top: 7px; }
.mt8 { margin-top: 8px; }
.mt9 { margin-top: 9px; }

.pl6 { padding-left: 6px; }
```
